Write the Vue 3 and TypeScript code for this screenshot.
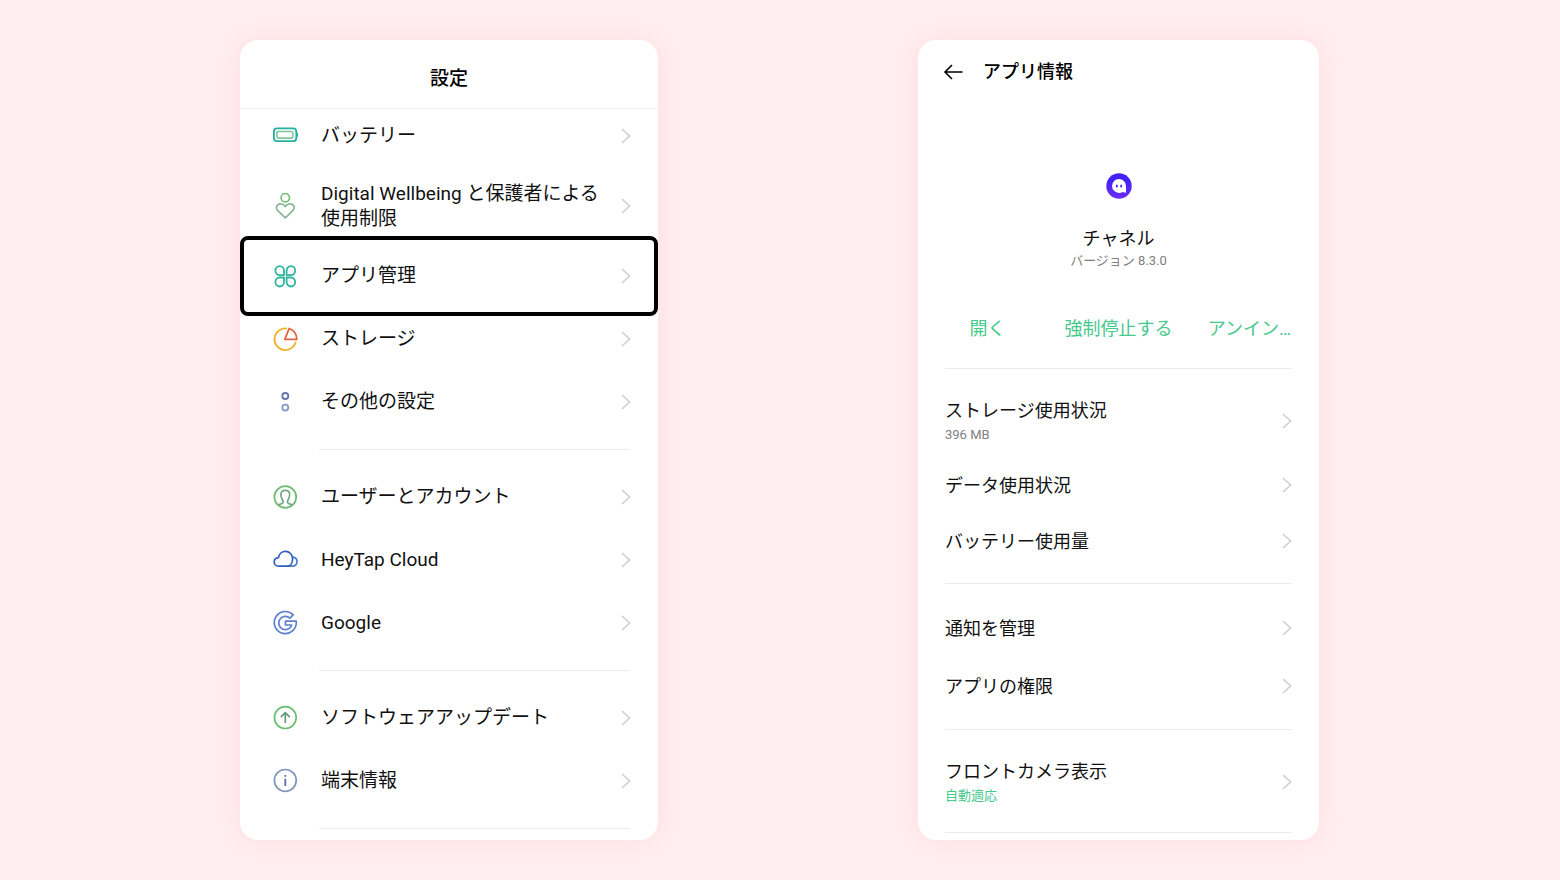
<script setup lang="ts">
interface Stroke {
  d: string
  color: string
  width?: number
}

interface SettingItem {
  label: string
  icon: Stroke[]
  tall?: boolean
  highlighted?: boolean
}

interface InfoItem {
  label: string
  detail?: string
  accent?: boolean
}

interface InfoGroup {
  roomy?: boolean
  items: InfoItem[]
}

interface Action {
  text: string
  name: string
}

const circle = (cx: number, cy: number, r: number): string =>
  `M${cx - r} ${cy}a${r} ${r} 0 1 0 ${2 * r} 0a${r} ${r} 0 1 0 ${-2 * r} 0Z`

const settingGroups: SettingItem[][] = [
  [
    {
      label: 'バッテリー',
      icon: [
        { d: 'M5 5.4H21Q24.3 5.4 24.3 8.7V14.9Q24.3 18.2 21 18.2H5Q1.9 18.2 1.9 14.9V8.7Q1.9 5.4 5 5.4Z', color: '#1fb3a0', width: 1.8 },
        { d: 'M6.4 8.5H19.4Q20.9 8.5 20.9 10V13.6Q20.9 15.1 19.4 15.1H6.4Q4.9 15.1 4.9 13.6V10Q4.9 8.5 6.4 8.5Z', color: '#7fc49c', width: 1.6 },
        { d: 'M25.2 9.8V13.8', color: '#1fb3a0', width: 1.6 },
      ],
    },
    {
      label: 'Digital Wellbeing と保護者による使用制限',
      tall: true,
      icon: [
        { d: circle(13.3, 4.7, 4.2), color: '#72c274' },
        { d: 'M13.3 24.8L5.8 17.6C3.8 15.6 4 13 5.9 11.7C8.2 10.1 11.6 10.9 13.3 13.5C15 10.9 18.4 10.1 20.7 11.7C22.6 13 22.8 15.6 20.8 17.6Z', color: '#88b596' },
      ],
    },
    {
      label: 'アプリ管理',
      highlighted: true,
      icon: [
        { d: 'M12 12.1H7.7A4.3 4.5 0 1 1 12 7.6Z', color: '#2db5a0', width: 1.8 },
        { d: 'M14.6 12.1H18.9A4.3 4.5 0 1 0 14.6 7.6Z', color: '#2db5a0', width: 1.8 },
        { d: 'M12 14.5H7.7A4.3 4.5 0 1 0 12 19Z', color: '#2db5a0', width: 1.8 },
        { d: 'M14.6 14.5H18.9A4.3 4.5 0 1 1 14.6 19Z', color: '#2db5a0', width: 1.8 },
      ],
    },
    {
      label: 'ストレージ',
      icon: [
        { d: 'M15 2.6A10.8 10.8 0 1 0 23.8 15.6', color: '#edb52e', width: 1.8 },
        { d: 'M12.8 13.3L17.2 2.5C21.5 4 24.6 8 24.8 13.3Z', color: '#e2633f', width: 1.8 },
      ],
    },
    {
      label: 'その他の設定',
      icon: [
        { d: circle(13.3, 7, 3), color: '#6474aa', width: 1.8 },
        { d: circle(13.3, 18.6, 3), color: '#8799ca', width: 1.8 },
      ],
    },
  ],
  [
    {
      label: 'ユーザーとアカウント',
      icon: [
        { d: circle(13.3, 13, 10.9), color: '#6cbe70' },
        { d: 'M6.3 21C8 19.9 11.2 19.9 11.2 18C11.2 16.1 8.9 14.3 8.9 10.7C8.9 7.9 10.5 6.3 13.3 6.3C16.1 6.3 17.7 7.9 17.7 10.7C17.7 14.3 15.4 16.1 15.4 18C15.4 19.9 18.6 19.9 20.3 21', color: '#72a986' },
      ],
    },
    {
      label: 'HeyTap Cloud',
      icon: [
        { d: 'M20.5 10.2C23.3 10.4 25 12.3 25 14.6C25 17.2 23.2 19.2 20.5 19.2H15', color: '#4a78cb' },
        { d: 'M6.5 19.2C4 19.2 2.2 17.4 2.2 15C2.2 12.6 3.8 10.9 6.5 10.7C7 6.8 10 4.4 13.5 4.4C17.5 4.4 20.6 7.5 20.6 11.8C20.6 16.1 18.4 19.2 15 19.2Z', color: '#315fbd' },
      ],
    },
    {
      label: 'Google',
      icon: [
        { d: 'M21.2 4.9A11 11 0 1 0 24.2 11.2H13.5V15H19.7A6.6 6.6 0 1 1 17.9 8.2Z', color: '#5d7fce' },
      ],
    },
  ],
  [
    {
      label: 'ソフトウェアアップデート',
      icon: [
        { d: circle(13.3, 12.6, 10.9), color: '#6cbe70' },
        { d: 'M13.3 18.1V7.9M8.8 12.2L13.3 7.7L17.8 12.2', color: '#649d78' },
      ],
    },
    {
      label: '端末情報',
      icon: [
        { d: circle(13.3, 12.4, 10.9), color: '#8295bd' },
        { d: 'M13.3 10.7V18.1M13.3 6.9V8.7', color: '#5f71a0', width: 1.8 },
      ],
    },
  ],
]

const actions: Action[] = [
  { text: '開く', name: '開く' },
  { text: '強制停止する', name: '強制停止する' },
  { text: 'アンイン…', name: 'アンインストール' },
]

const infoGroups: InfoGroup[] = [
  {
    items: [
      { label: 'ストレージ使用状況', detail: '396 MB' },
      { label: 'データ使用状況' },
      { label: 'バッテリー使用量' },
    ],
  },
  { roomy: true, items: [{ label: '通知を管理' }, { label: 'アプリの権限' }] },
  { items: [{ label: 'フロントカメラ表示', detail: '自動適応', accent: true }] },
]
</script>

<template>
  <main class="page">
    <section class="panel" aria-labelledby="settings-title">
      <header class="settings-header">
        <h1 id="settings-title" class="title">設定</h1>
      </header>
      <div class="settings-list">
        <div v-for="(group, g) in settingGroups" :key="g" class="settings-group">
          <button
            v-for="item in group"
            :key="item.label"
            type="button"
            class="setting"
            :class="{ tall: item.tall, highlighted: item.highlighted }"
          >
            <svg class="setting-icon" viewBox="0 0 26 26" fill="none" stroke-linejoin="round" aria-hidden="true">
              <path
                v-for="(s, i) in item.icon"
                :key="i"
                :d="s.d"
                :stroke="s.color"
                :stroke-width="s.width ?? 1.7"
              />
            </svg>
            <span class="setting-label">{{ item.label }}</span>
            <svg class="chevron" viewBox="0 0 10 16" fill="none" aria-hidden="true">
              <path d="M1 1L8.6 8L1 15" />
            </svg>
          </button>
          <hr class="divider" />
        </div>
      </div>
    </section>

    <section class="panel info" aria-labelledby="info-title">
      <header class="info-header">
        <button type="button" class="back" aria-label="戻る">
          <svg viewBox="0 0 20 16" fill="none" aria-hidden="true">
            <path d="M19.5 8H2.5M9 1L2 8L9 15" />
          </svg>
        </button>
        <h2 id="info-title" class="title info-title">アプリ情報</h2>
      </header>

      <div class="app">
        <svg class="app-icon" viewBox="0 0 26 26" aria-hidden="true">
          <defs>
            <linearGradient id="app-fill" x1="0" y1="0" x2="0" y2="1">
              <stop offset="0.3" stop-color="#4420fa" />
              <stop offset="1" stop-color="#6a2cf6" />
            </linearGradient>
          </defs>
          <circle cx="13" cy="13" r="12.7" fill="url(#app-fill)" />
          <path d="M13 5.9A7 7 0 0 1 20 12.9V19.2Q20 19.9 19.3 19.7L17 19Q15 19.9 13 19.9A7 7 0 0 1 13 5.9Z" fill="#fff" />
          <ellipse cx="10.8" cy="13" rx="1" ry="1.6" fill="#4420fa" />
          <ellipse cx="15.2" cy="13" rx="1" ry="1.6" fill="#4420fa" />
        </svg>
        <p class="app-name">チャネル</p>
        <p class="app-version">バージョン 8.3.0</p>
      </div>

      <div class="actions">
        <button v-for="a in actions" :key="a.name" type="button" class="action" :aria-label="a.name">{{ a.text }}</button>
      </div>
      <hr class="info-divider" />

      <template v-for="(group, g) in infoGroups" :key="g">
        <div class="info-group" :class="{ roomy: group.roomy }">
          <button
            v-for="item in group.items"
            :key="item.label"
            type="button"
            class="info-row"
            :class="{ detailed: item.detail }"
          >
            <span class="info-text">
              <span class="info-label">{{ item.label }}</span>
              <span v-if="item.detail" class="info-detail" :class="{ accent: item.accent }">{{ item.detail }}</span>
            </span>
            <svg class="chevron" viewBox="0 0 10 16" fill="none" aria-hidden="true">
              <path d="M1 1L8.6 8L1 15" />
            </svg>
          </button>
        </div>
        <hr class="info-divider" />
      </template>
    </section>
  </main>
</template>

<style>
body {
  margin: 0;
  background: #ffedf0;
}
</style>

<style scoped>
.page {
  display: grid;
  grid-template-columns: 418fr 401fr;
  column-gap: 260px;
  align-items: stretch;
  padding: 40px 241px 40px 240px;
  color: #111;
  font-family: Roboto, "Noto Sans CJK JP", sans-serif;
}

.panel {
  min-width: 0;
  overflow: hidden;
  border-radius: 18px;
  background: #fff;
  box-shadow: 0 0 20px rgba(255, 190, 190, 0.3);
}

button {
  padding: 0;
  border: 0;
  background: none;
  color: inherit;
  font: inherit;
  text-align: left;
  cursor: pointer;
}

hr {
  height: 1px;
  border: 0;
  background: #ebebeb;
}

.title {
  margin: 0;
  font-size: 19px;
  line-height: 24px;
  font-weight: 500;
  color: #000;
}

.chevron {
  flex: none;
  width: 10px;
  height: 16px;
  stroke: #cfcfcf;
  stroke-width: 1.6;
}

.settings-header {
  padding: 27px 0 17px;
  border-bottom: 1px solid #f2f2f2;
  text-align: center;
}

.settings-list {
  margin-top: -5px;
  padding-bottom: 11px;
}

.setting {
  position: relative;
  display: flex;
  align-items: center;
  width: 100%;
  min-height: 63px;
  padding: 0 27px 0 32px;
  font-size: 19px;
  line-height: 25px;
}

.setting.tall {
  min-height: 77px;
}

.setting.highlighted::after {
  content: "";
  position: absolute;
  inset: -8px 0 -9px;
  border: 4px solid #000;
  border-radius: 8px;
}

.setting-icon {
  flex: none;
  width: 26px;
  height: 26px;
}

.setting-label {
  flex: 1;
  min-width: 0;
  margin: 0 14px 0 23px;
}

.divider {
  margin: 16px 28px 15px 79px;
}

.settings-group:last-child .divider {
  margin-bottom: 0;
}

.info {
  box-sizing: border-box;
  padding: 0 27px 6px;
}

.info-header {
  display: flex;
  align-items: center;
  gap: 20px;
  height: 64px;
}

.info-title {
  font-size: 18px;
}

.back {
  display: flex;
  width: 20px;
  height: 16px;
  margin-left: -2px;
}

.back svg {
  width: 20px;
  height: 16px;
  stroke: #000;
  stroke-width: 1.6;
}

.app {
  display: flex;
  flex-direction: column;
  align-items: center;
  padding-top: 69px;
}

.app-icon {
  width: 26px;
  height: 26px;
  margin-bottom: 28px;
}

.app-name,
.app-version {
  margin: 0;
}

.app-name {
  font-size: 18px;
  line-height: 24px;
}

.app-version {
  font-size: 13px;
  line-height: 20px;
  color: #808080;
}

.actions {
  display: grid;
  grid-template-columns: 85px 1fr 85px;
  margin: 40px 0 21px;
}

.action {
  font-size: 18px;
  line-height: 36px;
  text-align: center;
  white-space: nowrap;
  color: #45c98c;
}

.info-divider {
  margin: 0;
}

.info-group {
  padding: 15px 0 14px;
}

.info-row {
  display: flex;
  align-items: center;
  justify-content: space-between;
  width: 100%;
  min-height: 56px;
  font-size: 18px;
  line-height: 26px;
}

.roomy .info-row {
  min-height: 58px;
}

.info-row.detailed {
  min-height: 73px;
}

.info-text {
  display: flex;
  flex-direction: column;
  padding-top: 2px;
}

.info-detail {
  font-size: 13px;
  line-height: 22px;
  color: #808080;
}

.info-detail.accent {
  color: #45c98c;
}

@media (max-width: 1300px) {
  .page {
    column-gap: 40px;
    padding: 40px;
  }
}

@media (max-width: 760px) {
  .page {
    grid-template-columns: 1fr;
    row-gap: 40px;
    padding: 20px;
  }
}
</style>
